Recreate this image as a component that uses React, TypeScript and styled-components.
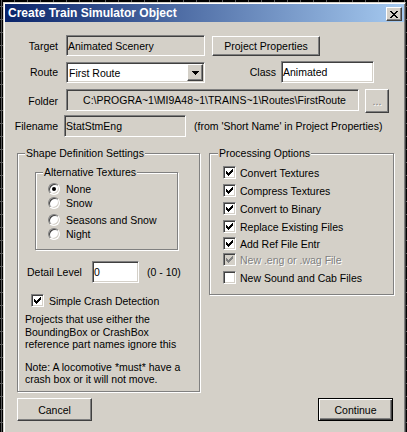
import React from 'react';
import styled, { createGlobalStyle, css } from 'styled-components';

const GlobalStyle = createGlobalStyle`
  html, body { margin: 0; padding: 0; width: 407px; height: 432px; overflow: hidden; }
  body {
    background-color: #000;
    background-image:
      linear-gradient(to bottom, #5a5a5a 0 1px, transparent 1px),
      linear-gradient(to right, #5a5a5a 0 1px, transparent 1px);
    background-size: 13px 13px;
    background-position: 0 6px, 1px 0;
    font-family: "Liberation Sans", Arial, sans-serif;
    font-size: 10.5px;
    color: #000;
  }
`;

const sunken = css`
  border: 1px solid;
  border-color: #808080 #fff #fff #808080;
  box-shadow: inset 1px 1px 0 #404040, inset -1px -1px 0 #d4d0c8;
`;

const raised = css`
  border: 1px solid;
  border-color: #fff #404040 #404040 #fff;
  box-shadow: inset -1px -1px 0 #808080;
`;

const Window = styled.div`
  box-sizing: border-box;
  margin: 2px 0 0 3px;
  width: 403px;
  height: 440px;
  background: #d4d0c8;
  border: 1px solid;
  border-color: #d4d0c8 #404040 #404040 #d4d0c8;
  box-shadow: inset 1px 1px 0 #fff, inset -1px -1px 0 #808080;
  padding: 1px 1px 0 1px;
  display: flex;
  flex-direction: column;
`;

const TitleBar = styled.div`
  height: 18px;
  display: flex;
  align-items: center;
  justify-content: space-between;
  padding: 0 2px 0 3px;
  background: linear-gradient(to right, #0a246a, #a6caf0);
`;

const TitleText = styled.span`
  color: #fff;
  font-weight: bold;
  font-size: 12px;
  white-space: nowrap;
`;

const CloseButton = styled.div`
  ${raised};
  box-sizing: border-box;
  width: 16px;
  height: 14px;
  margin-top: 2px;
  background: #d4d0c8;
  display: flex;
  align-items: center;
  justify-content: center;
`;

const Content = styled.div`
  display: flex;
  flex-direction: column;
  padding-top: 13px;
`;

const Row = styled.div<{ $mt: number; $h: number; $align?: string }>`
  display: flex;
  align-items: ${(p) => p.$align ?? 'center'};
  margin-top: ${(p) => p.$mt}px;
  height: ${(p) => p.$h}px;
`;

const Label = styled.span<{ $w: number }>`
  width: ${(p) => p.$w}px;
  flex-shrink: 0;
  text-align: right;
  white-space: nowrap;
  align-self: center;
`;

const Field = styled.div<{ $w: number; $h: number; $white?: boolean; $ml?: number; $center?: boolean }>`
  ${sunken};
  box-sizing: border-box;
  width: ${(p) => p.$w}px;
  height: ${(p) => p.$h}px;
  margin-left: ${(p) => p.$ml ?? 8}px;
  flex-shrink: 0;
  background: ${(p) => (p.$white ? '#fff' : '#d4d0c8')};
  display: flex;
  align-items: center;
  justify-content: ${(p) => (p.$center ? 'center' : 'flex-start')};
  padding: 0 2px 0 ${(p) => (p.$center ? 6 : 1)}px;
  white-space: nowrap;
  overflow: hidden;
`;

const Combo = styled.div`
  ${sunken};
  box-sizing: border-box;
  width: 139px;
  height: 21px;
  margin-left: 8px;
  background: #fff;
  display: flex;
  align-items: center;
  padding: 1px 1px 1px 2px;
`;

const ComboText = styled.span`
  flex: 1;
  white-space: nowrap;
`;

const ComboButton = styled.div`
  ${raised};
  box-sizing: border-box;
  width: 16px;
  height: 17px;
  background: #d4d0c8;
  display: flex;
  align-items: center;
  justify-content: center;
`;

const Button = styled.button<{ $w: number; $h: number; $ml?: number; $default?: boolean; $disabled?: boolean }>`
  box-sizing: border-box;
  width: ${(p) => p.$w}px;
  height: ${(p) => p.$h}px;
  margin: 0 0 0 ${(p) => p.$ml ?? 0}px;
  padding: 0;
  flex-shrink: 0;
  background: #d4d0c8;
  font: inherit;
  color: ${(p) => (p.$disabled ? '#808080' : '#000')};
  text-shadow: ${(p) => (p.$disabled ? '1px 1px 0 #fff' : 'none')};
  display: flex;
  align-items: center;
  justify-content: center;
  ${(p) =>
    p.$default
      ? css`
          border: 1px solid #000;
          box-shadow: inset 1px 1px 0 #fff, inset -1px -1px 0 #404040, inset -2px -2px 0 #808080;
        `
      : raised}
`;

const Hint = styled.span`
  margin-left: 8px;
  white-space: nowrap;
`;

const Columns = styled.div`
  display: flex;
  align-items: flex-start;
  gap: 9px;
  margin: 16px 0 0 12px;
`;

const Group = styled.div<{ $w: number; $h: number; $mt?: number; $ml?: number }>`
  box-sizing: border-box;
  width: ${(p) => p.$w}px;
  height: ${(p) => p.$h}px;
  margin: ${(p) => p.$mt ?? 0}px 0 0 ${(p) => p.$ml ?? 0}px;
  border: 1px solid #808080;
  box-shadow: inset 1px 1px 0 #fff, 1px 1px 0 #fff;
  display: flex;
  flex-direction: column;
  align-items: flex-start;
  flex-shrink: 0;
`;

const GroupTitle = styled.span<{ $ml: number }>`
  margin: -7px 0 0 ${(p) => p.$ml}px;
  padding: 0 1px;
  height: 13px;
  line-height: 13px;
  background: #d4d0c8;
  white-space: nowrap;
`;

const OptionRow = styled.div<{ $mt: number; $h: number; $ml: number }>`
  display: flex;
  align-items: center;
  height: ${(p) => p.$h}px;
  margin: ${(p) => p.$mt}px 0 0 ${(p) => p.$ml}px;
  white-space: nowrap;
`;

const RadioCircle = styled.span`
  box-sizing: border-box;
  width: 12px;
  height: 12px;
  border-radius: 50%;
  border: 1px solid;
  border-color: #808080 #fff #fff #808080;
  box-shadow: inset 1px 1px 0 #404040, inset -1px -1px 0 #d4d0c8;
  background: #fff;
  display: flex;
  align-items: center;
  justify-content: center;
  flex-shrink: 0;
`;

const RadioDot = styled.span`
  width: 4px;
  height: 4px;
  border-radius: 50%;
  background: #000;
`;

const CheckBox = styled.span<{ $disabled?: boolean }>`
  ${sunken};
  box-sizing: border-box;
  width: 13px;
  height: 13px;
  background: ${(p) => (p.$disabled ? '#d4d0c8' : '#fff')};
  display: flex;
  align-items: center;
  justify-content: center;
  flex-shrink: 0;
`;

const OptionLabel = styled.span<{ $ml: number; $disabled?: boolean }>`
  margin-left: ${(p) => p.$ml}px;
  color: ${(p) => (p.$disabled ? '#808080' : '#000')};
  text-shadow: ${(p) => (p.$disabled ? '1px 1px 0 #fff' : 'none')};
`;

const DetailLabel = styled.span`
  width: 65px;
  flex-shrink: 0;
  white-space: nowrap;
`;

const Paragraph = styled.p<{ $mt: number }>`
  margin: ${(p) => p.$mt}px 0 0 7px;
  line-height: 12.5px;
  white-space: nowrap;
`;

const ButtonRow = styled.div`
  display: flex;
  justify-content: space-between;
  width: 376px;
  margin: 6px 0 0 12px;
`;

const CheckMark: React.FC<{ color: string }> = ({ color }) => (
  <svg width="7" height="7" viewBox="0 0 7 7" shapeRendering="crispEdges">
    <path
      fill={color}
      d="M0 2h1v3H0z M1 3h1v3H1z M2 4h1v3H2z M3 3h1v3H3z M4 2h1v3H4z M5 1h1v3H5z M6 0h1v3H6z"
    />
  </svg>
);

const CloseGlyph = () => (
  <svg width="8" height="7" viewBox="0 0 8 7" shapeRendering="crispEdges">
    <path
      fill="#000"
      d="M0 0h2v1H0z M6 0h2v1H6z M1 1h2v1H1z M5 1h2v1H5z M2 2h4v1H2z M3 3h2v1H3z M2 4h4v1H2z M1 5h2v1H1z M5 5h2v1H5z M0 6h2v1H0z M6 6h2v1H6z"
    />
  </svg>
);

const DownArrow = () => (
  <svg width="7" height="4" viewBox="0 0 7 4" shapeRendering="crispEdges">
    <path fill="#000" d="M0 0h7v1H0z M1 1h5v1H1z M2 2h3v1H2z M3 3h1v1H3z" />
  </svg>
);

const radios = [
  { label: 'None', checked: true, mt: 3 },
  { label: 'Snow', checked: false, mt: 0 },
  { label: 'Seasons and Snow', checked: false, mt: 3 },
  { label: 'Night', checked: false, mt: 0 },
];

const options = [
  { label: 'Convert Textures', checked: true, mt: 6 },
  { label: 'Compress Textures', checked: true, mt: 5 },
  { label: 'Convert to Binary', checked: true, mt: 5 },
  { label: 'Replace Existing Files', checked: true, mt: 5 },
  { label: 'Add Ref File Entr', checked: true, mt: 4 },
  { label: 'New .eng or .wag File', checked: true, disabled: true, mt: 3 },
  { label: 'New Sound and Cab Files', checked: false, mt: 5 },
];

export default function App() {
  return (
    <>
      <GlobalStyle />
      <Window>
        <TitleBar>
          <TitleText>Create Train Simulator Object</TitleText>
          <CloseButton>
            <CloseGlyph />
          </CloseButton>
        </TitleBar>
        <Content>
          <Row $mt={0} $h={21}>
            <Label $w={53}>Target</Label>
            <Field $w={139} $h={21}>Animated Scenery</Field>
            <Button $w={108} $h={20} $ml={7}>Project Properties</Button>
          </Row>
          <Row $mt={5} $h={22} $align="flex-end">
            <Label $w={53}>Route</Label>
            <Combo>
              <ComboText>First Route</ComboText>
              <ComboButton>
                <DownArrow />
              </ComboButton>
            </Combo>
            <Label $w={71}>Class</Label>
            <Field $w={93} $h={22} $ml={5} $white>Animated</Field>
          </Row>
          <Row $mt={6} $h={24} $align="flex-start">
            <Label $w={53}>Folder</Label>
            <Field $w={293} $h={22} $center>C:\PROGRA~1\MI9A48~1\TRAINS~1\Routes\FirstRoute</Field>
            <Button $w={24} $h={24} $ml={6} $disabled>...</Button>
          </Row>
          <Row $mt={2} $h={22}>
            <Label $w={53}>Filename</Label>
            <Field $w={122} $h={22} $ml={6}>StatStmEng</Field>
            <Hint>(from 'Short Name' in Project Properties)</Hint>
          </Row>
          <Columns>
            <Group $w={183} $h={239}>
              <GroupTitle $ml={7}>Shape Definition Settings</GroupTitle>
              <Group $w={143} $h={78} $mt={12} $ml={17}>
                <GroupTitle $ml={7}>Alternative Textures</GroupTitle>
                {radios.map((r) => (
                  <OptionRow key={r.label} $mt={r.mt} $h={14} $ml={12}>
                    <RadioCircle>{r.checked && <RadioDot />}</RadioCircle>
                    <OptionLabel $ml={6}>{r.label}</OptionLabel>
                  </OptionRow>
                ))}
              </Group>
              <OptionRow $mt={11} $h={22} $ml={9}>
                <DetailLabel>Detail Level</DetailLabel>
                <Field $w={47} $h={22} $ml={0} $white>0</Field>
                <Hint>(0 - 10)</Hint>
              </OptionRow>
              <OptionRow $mt={11} $h={13} $ml={13}>
                <CheckBox>
                  <CheckMark color="#000" />
                </CheckBox>
                <OptionLabel $ml={5}>Simple Crash Detection</OptionLabel>
              </OptionRow>
              <Paragraph $mt={6}>
                Projects that use either the
                <br />
                BoundingBox or CrashBox
                <br />
                reference part names ignore this
              </Paragraph>
              <Paragraph $mt={10}>
                Note: A locomotive *must* have a
                <br />
                crash box or it will not move.
              </Paragraph>
            </Group>
            <Group $w={185} $h={142}>
              <GroupTitle $ml={8}>Processing Options</GroupTitle>
              {options.map((o) => (
                <OptionRow key={o.label} $mt={o.mt} $h={13} $ml={13}>
                  <CheckBox $disabled={o.disabled}>
                    {o.checked && <CheckMark color={o.disabled ? '#808080' : '#000'} />}
                  </CheckBox>
                  <OptionLabel $ml={4} $disabled={o.disabled}>
                    {o.label}
                  </OptionLabel>
                </OptionRow>
              ))}
            </Group>
          </Columns>
          <ButtonRow>
            <Button $w={75} $h={23}>Cancel</Button>
            <Button $w={75} $h={23} $default>Continue</Button>
          </ButtonRow>
        </Content>
      </Window>
    </>
  );
}
